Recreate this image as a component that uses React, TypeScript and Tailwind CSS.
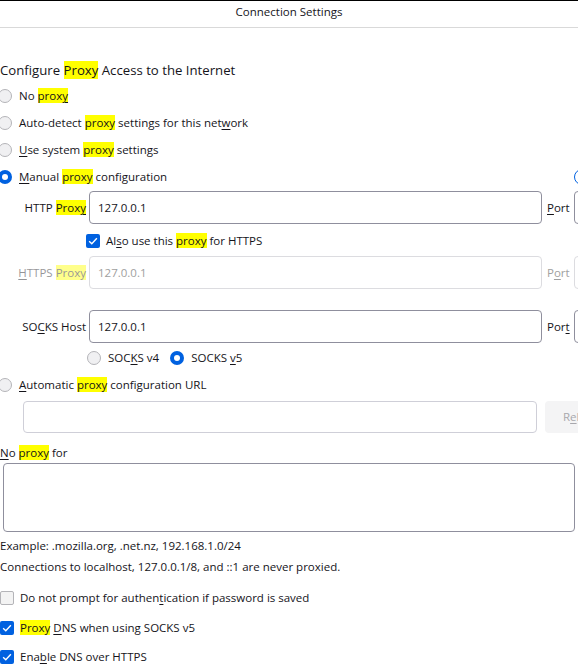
import type { ReactNode } from "react";

const font = { fontFamily: '"Open Sans", "Noto Sans", sans-serif' };

function Hl({ children }: { children: ReactNode }) {
	return <mark className="bg-[#ffff00] text-inherit">{children}</mark>;
}

function Key({ children }: { children: ReactNode }) {
	return <u className="underline decoration-1 underline-offset-2">{children}</u>;
}

function Radio({ checked = false }: { checked?: boolean }) {
	if (checked) {
		return (
			<span className="flex size-[14px] shrink-0 items-center justify-center rounded-full bg-[#0061e0]">
				<span className="size-[6px] rounded-full bg-white" />
			</span>
		);
	}
	return (
		<span className="size-[14px] shrink-0 rounded-full border border-[#b4b4b8] bg-[#f0f0f2]" />
	);
}

function Check({ checked = false }: { checked?: boolean }) {
	if (!checked) {
		return (
			<span className="size-[14px] shrink-0 rounded-[2px] border border-[#b4b4b8] bg-[#f3f3f3]" />
		);
	}
	return (
		<span className="flex size-[14px] shrink-0 items-center justify-center rounded-[2px] bg-[#0061e0]">
			<svg viewBox="0 0 14 14" className="size-[12px]" fill="none">
				<path d="M2.5 7.2 5.6 10.2 11.5 3.8" stroke="white" strokeWidth="1.6" />
			</svg>
		</span>
	);
}

function Option({
	checked,
	children,
	className = "",
}: {
	checked?: boolean;
	children: ReactNode;
	className?: string;
}) {
	return (
		<div className={`flex h-[27px] items-center gap-[7px] ${className}`}>
			<Radio checked={checked} />
			<span>{children}</span>
		</div>
	);
}

function ProxyRow({
	label,
	value,
	port,
	disabled = false,
}: {
	label: ReactNode;
	value: string;
	port: ReactNode;
	disabled?: boolean;
}) {
	return (
		<div className="flex h-[33px] items-center">
			<div
				className={`w-[89px] shrink-0 pr-[3px] text-right ${disabled ? "opacity-45" : ""}`}
			>
				{label}
			</div>
			<div
				className={`flex h-[33px] w-[453px] shrink-0 items-center rounded-[4px] border px-[8px] ${
					disabled ? "border-[#dcdce0] text-[#a0a0a0]" : "border-[#8f8f9d]"
				}`}
			>
				{value}
			</div>
			<span className={`ml-[5px] ${disabled ? "text-[#a0a0a0]" : ""}`}>{port}</span>
			<div
				className={`ml-[4px] h-[33px] w-[60px] shrink-0 rounded-[4px] border ${
					disabled ? "border-[#dcdce0]" : "border-[#8f8f9d]"
				}`}
			/>
		</div>
	);
}

export default function App() {
	return (
		<div
			className="relative h-[672px] w-[578px] overflow-hidden bg-white text-[11.5px] text-[#15141a]"
			style={font}
		>
			<div className="flex h-[28px] items-center justify-center border-t border-b border-t-black border-b-[#d9d9d9] pb-[4px] text-[11.5px]">
				Connection Settings
			</div>

			<div className="w-[640px]">
				<div className="mt-[31px] h-[22px] text-[13.2px] leading-[22px]">
					Configure <Hl>Proxy</Hl> Access to the Internet
				</div>

				<div className="-ml-[2px] mt-[1px]">
					<Option>
						No <Hl>prox<Key>y</Key></Hl>
					</Option>
					<Option>
						Auto-detect <Hl>proxy</Hl> settings for this net<Key>w</Key>ork
					</Option>
					<Option>
						<Key>U</Key>se system <Hl>proxy</Hl> settings
					</Option>
					<Option checked>
						<Key>M</Key>anual <Hl>proxy</Hl> configuration
					</Option>
				</div>

				<div className="mt-[1px]">
					<ProxyRow
						label={
							<>
								HTTP <Hl>Prox<Key>y</Key></Hl>
							</>
						}
						value="127.0.0.1"
						port={
							<>
								<Key>P</Key>ort
							</>
						}
					/>
				</div>

				<div className="flex h-[32px] items-center gap-[6px] pl-[86px] pt-[2px]">
					<Check checked />
					<span>
						Al<Key>s</Key>o use this <Hl>proxy</Hl> for HTTPS
					</span>
				</div>

				<ProxyRow
					disabled
					label={
						<>
							<Key>H</Key>TTPS <Hl>Proxy</Hl>
						</>
					}
					value="127.0.0.1"
					port={
						<>
							P<Key>o</Key>rt
						</>
					}
				/>

				<div className="h-[21px]" />

				<ProxyRow
					label={
						<>
							SO<Key>C</Key>KS Host
						</>
					}
					value="127.0.0.1"
					port={
						<>
							Por<Key>t</Key>
						</>
					}
				/>

				<div className="mt-[1px] flex h-[27px] items-center pl-[87px]">
					<Option>
						SOC<Key>K</Key>S v4
					</Option>
					<Option checked className="ml-[11px]">
						SOCKS <Key>v</Key>5
					</Option>
				</div>

				<div className="-ml-[2px]">
					<Option>
						<Key>A</Key>utomatic <Hl>proxy</Hl> configuration URL
					</Option>
				</div>

				<div className="mt-[3px] flex h-[32px] items-center pl-[23px]">
					<div className="h-[32px] w-[514px] rounded-[4px] border border-[#cfcfd8]" />
					<div className="ml-[8px] flex h-[32px] w-[70px] items-center rounded-[4px] bg-[#f4f4f5] pl-[18px] text-[#a8a8ad]">
						R<Key>e</Key>load
					</div>
				</div>

				<div className="mt-[10px] flex h-[20px] items-center">
					<span>
						<Key>N</Key>o <Hl>proxy</Hl> for
					</span>
				</div>

				<div className="ml-[3px] h-[69px] w-[572px] rounded-[4px] border border-[#8f8f9d]" />

				<div className="mt-[3px] flex h-[21px] items-center">
					Example: .mozilla.org, .net.nz, 192.168.1.0/24
				</div>
				<div className="flex h-[21px] items-center">
					Connections to localhost, 127.0.0.1/8, and ::1 are never proxied.
				</div>

				<div className="mt-[7px] flex h-[27px] items-center gap-[6px]">
					<Check />
					<span>
						Do not prompt for authen<Key>t</Key>ication if password is saved
					</span>
				</div>
				<div className="mt-[3px] flex h-[27px] items-center gap-[6px]">
					<Check checked />
					<span>
						<Hl>Proxy</Hl> <Key>D</Key>NS when using SOCKS v5
					</span>
				</div>
				<div className="mt-[2px] flex h-[27px] items-center gap-[6px]">
					<Check checked />
					<span>
						Ena<Key>b</Key>le DNS over HTTPS
					</span>
				</div>
			</div>

			<span className="absolute left-[574px] top-[169px] size-[16px] rounded-full border-[1.5px] border-[#0061e0]" />
		</div>
	);
}
